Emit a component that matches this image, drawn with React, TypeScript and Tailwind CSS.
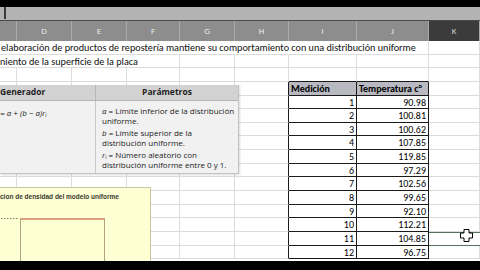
import React from 'react';

// visible columns C..K (C is cut off at the left edge)
const columns = ['', 'D', 'E', 'F', 'G', 'H', 'I', 'J', 'K'];

const temps = ['90.98', '100.81', '100.62', '107.85', '119.85', '97.29', '102.56', '99.65', '92.10', '112.21', '104.85', '96.75'];

const ROWS = 16;

function cellClass(r: number, c: number) {
  const inTable = r >= 3 && (c === 6 || c === 7);
  const aboveTable = r === 2 && (c === 6 || c === 7);
  const leftOfTable = r >= 3 && c === 5;
  let cls = 'border-r border-b ';
  cls += inTable || leftOfTable ? 'border-r-[#1a1a1a] ' : 'border-r-[#dcdcdc] ';
  cls += inTable || aboveTable ? 'border-b-[#1a1a1a]' : 'border-b-[#dcdcdc]';
  return cls;
}

function SheetCell({ r, c }: { r: number; c: number }) {
  const base = cellClass(r, c);
  if (r === 3 && c === 6) {
    return <div className={`${base} bg-[#b9bac1] px-[2px] font-bold leading-[13px] text-[10px] text-black`}>Medición</div>;
  }
  if (r === 3 && c === 7) {
    return <div className={`${base} bg-[#b9bac1] px-[2px] font-bold leading-[13px] text-[10px] text-black`}>Temperatura c°</div>;
  }
  if (r >= 4 && c === 6) {
    return <div className={`${base} bg-white px-[2px] text-right leading-[13px] text-[10px] text-black`}>{r - 3}</div>;
  }
  if (r >= 4 && c === 7) {
    return <div className={`${base} bg-white px-[2px] text-right leading-[13px] text-[10px] text-black`}>{temps[r - 4]}</div>;
  }
  if (r === 14 && c === 8) {
    return <div className="border-y border-[#56705b] bg-white" />;
  }
  return <div className={`${base} bg-white`} />;
}

export default function App() {
  return (
    <div className="flex h-[270px] w-[480px] flex-col overflow-hidden bg-black" style={{ fontFamily: 'Carlito, Lato, "Liberation Sans", sans-serif' }}>
      {/* top strip */}
      <div className="h-[7px] bg-black" />
      <div className="relative h-[14px] border-b border-[#4a4a4a] bg-[#b3b3b3]">
        <div className="absolute left-[4px] top-0 h-[12px] w-[2px] bg-[#3a3a3a]" />
      </div>

      {/* column headers */}
      <div className="grid h-[20px] grid-cols-[17px_55px_55px_53px_55px_54px_68px_72px_51px] bg-[#8d8d8d]">
        {columns.map((col, i) => (
          <div
            key={i}
            className={`flex items-center justify-center border-r border-[#a9a9a9] text-[9px] ${i === 8 ? 'bg-[#3b3b3b] text-[#d4d4d4]' : 'text-[#ececec]'}`}
          >
            {col}
          </div>
        ))}
      </div>

      {/* sheet body */}
      <div className="relative h-[220px] overflow-hidden bg-white">
        <div className="grid grid-cols-[17px_55px_55px_53px_55px_54px_68px_72px_51px] auto-rows-[13.65px]">
          {Array.from({ length: ROWS }).map((_, r) => {
            if (r === 0) {
              return (
                <React.Fragment key={r}>
                  <div className="col-span-8 overflow-hidden whitespace-nowrap border-b border-r border-[#dcdcdc] pl-[1px] text-[10.2px] leading-[13px] text-[#111]">
                    elaboración de productos de repostería mantiene su comportamiento con una distribución uniforme
                  </div>
                  <div className="border-b border-r border-[#dcdcdc]" />
                </React.Fragment>
              );
            }
            if (r === 1) {
              return (
                <React.Fragment key={r}>
                  <div className="col-span-4 overflow-hidden whitespace-nowrap border-b border-r border-[#dcdcdc] text-[10.2px] leading-[13px] text-[#111]">
                    niento de la superficie de la placa
                  </div>
                  {[4, 5, 6, 7, 8].map((c) => (
                    <SheetCell key={c} r={r} c={c} />
                  ))}
                </React.Fragment>
              );
            }
            return (
              <React.Fragment key={r}>
                {columns.map((_, c) => (
                  <SheetCell key={c} r={r} c={c} />
                ))}
              </React.Fragment>
            );
          })}
        </div>

        {/* pasted picture: generator / parameters table */}
        <div
          className="absolute left-0 top-[44px] flex h-[89px] w-[239px] flex-col border-r border-b border-[#c4c4c4] bg-[#f1f1f1] shadow-[1px_1px_2px_rgba(0,0,0,0.15)]"
          style={{ fontFamily: '"Open Sans", "Noto Sans", sans-serif' }}
        >
          <div className="flex h-[16px] border-b border-[#b5b5b5] bg-[#d2d2d2] text-[8.5px] font-bold text-[#222]">
            <div className="flex w-[96px] items-center border-r border-[#b8b8b8]">Generador</div>
            <div className="flex flex-1 items-center justify-center">Parámetros</div>
          </div>
          <div className="flex flex-1">
            <div className="w-[96px] border-r border-[#c8c8c8] pt-[6px] text-[8px] italic text-[#222]">
              = a + (b − a)r<sub className="text-[5px]">i</sub>
            </div>
            <div className="flex flex-1 flex-col gap-[3px] pl-[6px] pt-[5px] text-[8px] leading-[9.5px] text-[#222]">
              <div>
                <i>a</i> = Límite inferior de la distribución
                <br />
                uniforme.
              </div>
              <div>
                <i>b</i> = Límite superior de la
                <br />
                distribución uniforme.
              </div>
              <div>
                <i>r</i>
                <sub className="text-[5px]">i</sub> = Número aleatorio con
                <br />
                distribución uniforme entre 0 y 1.
              </div>
            </div>
          </div>
        </div>

        {/* pasted picture: uniform density chart */}
        <div className="absolute left-[-1px] top-[146px] h-[80px] w-[152px] border border-[#c9c6a2] bg-[#ffffd4]">
          <div className="pt-[5px] text-[6.5px] font-semibold leading-[8px] text-[#3a3a30]" style={{ fontFamily: '"Liberation Sans", sans-serif' }}>
            cion de densidad del modelo uniforme
          </div>
          <svg className="absolute left-0 top-0" width="152" height="80" viewBox="0 0 152 80">
            <line x1="1" y1="30.5" x2="19" y2="30.5" stroke="#8a8070" strokeWidth="1" strokeDasharray="1.5 1.5" />
            <line x1="20" y1="31" x2="105" y2="31" stroke="#b04a2a" strokeWidth="1.2" />
            <line x1="20.5" y1="31" x2="20.5" y2="80" stroke="#b0a280" strokeWidth="1" />
            <line x1="104.5" y1="31" x2="104.5" y2="80" stroke="#b0a280" strokeWidth="1" />
          </svg>
        </div>

        {/* excel cross cursor */}
        <svg className="absolute left-[460px] top-[188px]" width="13" height="13" viewBox="0 0 13 13">
          <path d="M4 0.5h5v3.5h3.5v5H9v3.5H4V9H0.5V4H4z" fill="#fff" stroke="#000" strokeWidth="1" />
        </svg>
      </div>

      <div className="flex-1 bg-black" />
    </div>
  );
}
